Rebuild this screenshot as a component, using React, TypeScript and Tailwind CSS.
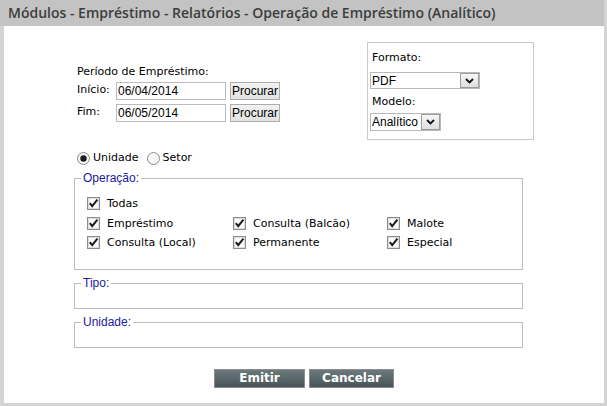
import React from "react";

const Check = () => (
  <svg width="13" height="13" viewBox="0 0 13 13" className="shrink-0">
    <rect x="0.5" y="0.5" width="12" height="12" fill="#f2f2f2" stroke="#8a8b8c" />
    <rect x="1.5" y="1.5" width="10" height="10" fill="#fbfbfb" stroke="#dedede" />
    <path d="M2.8 6.2 L5.2 9.2 L10.4 2.6" fill="none" stroke="#1a1a1a" strokeWidth="2" />
  </svg>
);

const Radio = ({ checked }: { checked?: boolean }) => (
  <svg width="13" height="13" viewBox="0 0 13 13" className="shrink-0">
    <circle cx="6.5" cy="6.5" r="6" fill="#f6f6f6" stroke="#8a8a8a" />
    {checked && <circle cx="6.5" cy="6.5" r="3.2" fill="#1c1c1c" />}
  </svg>
);

const Select = ({ value, className }: { value: string; className: string }) => (
  <div className={`flex bg-white border border-[#b8b8b8] ${className}`}>
    <span className="flex-1 pl-[1px] flex items-center font-['Liberation_Sans',sans-serif] text-[12px] leading-[14px]">
      {value}
    </span>
    <span className="w-[19px] border border-[#9c9c9c] bg-linear-to-b from-[#f6f6f6] to-[#dedede] flex items-center justify-center">
      <svg width="9" height="6" viewBox="0 0 9 6">
        <path d="M1 1 L4.5 4.5 L8 1" fill="none" stroke="#111" strokeWidth="1.8" />
      </svg>
    </span>
  </div>
);

const DateRow = ({ label, value }: { label: string; value: string }) => (
  <div className="flex items-start h-[18px]">
    <span className="w-[39px] pt-[1px]">{label}</span>
    <div className="w-[110px] h-[18px] border border-[#bcbcbc] pl-[1px] flex items-center font-['Liberation_Sans',sans-serif] text-[12px]">
      {value}
    </div>
    <button className="ml-[4px] w-[50px] h-[18px] border border-[#adadad] bg-linear-to-b from-[#f2f2f2] to-[#e2e2e2] font-['Liberation_Sans',sans-serif] text-[12px] leading-[14px] text-black">
      Procurar
    </button>
  </div>
);

const Option = ({ label }: { label: string }) => (
  <div className="flex items-start h-[19px]">
    <span className="mt-[3px]">
      <Check />
    </span>
    <span className="ml-[7px] mt-[3px] leading-[14px]">{label}</span>
  </div>
);

const Legend = ({ children }: { children: React.ReactNode }) => (
  <legend className="ml-[6px] px-[2px] font-['Liberation_Sans',sans-serif] text-[12px] leading-[14px] text-[#1a1aa0]">
    {children}
  </legend>
);

export default function App() {
  return (
    <div className="w-[607px] h-[406px] flex flex-col border-r-[3px] border-b-[3px] border-[#d4d4d4] font-['DejaVu_Sans',sans-serif] text-[11px] leading-[14px] text-black">
      <div className="h-[26px] shrink-0 bg-[#c3c3c3] flex items-center pl-[8px] font-['Open_Sans',sans-serif] font-semibold text-[14px] text-[#3d3d3d]">
        Módulos - Empréstimo - Relatórios - Operação de Empréstimo (Analítico)
      </div>

      <div className="flex-1 bg-white border-l-4 border-[#d4d4d4]">
        <div className="pl-[70px]">
          <div className="flex items-start pt-[16px]">
            <div className="w-[293px] pl-[3px] pt-[23px]">
              <div>Período de Empréstimo:</div>
              <div className="mt-[3px] flex flex-col gap-[4px]">
                <DateRow label="Início:" value="06/04/2014" />
                <DateRow label="Fim:" value="06/05/2014" />
              </div>
            </div>
            <div className="w-[167px] h-[98px] border border-[#c8c8c8] pl-[2px] pt-[8px]">
              <div className="pl-[2px]">Formato:</div>
              <Select className="mt-[7px] w-[110px] h-[17px]" value="PDF" />
              <div className="pl-[2px] mt-[6px]">Modelo:</div>
              <Select className="mt-[4px] w-[71px] h-[18px]" value="Analítico" />
            </div>
          </div>

          <div className="mt-[11px] h-[14px] pl-[3px] flex items-center">
            <Radio checked />
            <span className="ml-[3px]">Unidade</span>
            <span className="ml-[8px]">
              <Radio />
            </span>
            <span className="ml-[3px]">Setor</span>
          </div>

          <fieldset className="mt-[6px] w-[449px] border border-[#bdbdbd]">
            <Legend>Operação:</Legend>
            <div className="pl-[12px] pt-[9px] pb-[17px]">
              <div className="h-[20px]">
                <Option label="Todas" />
              </div>
              <div className="grid grid-cols-[146px_154px_1fr]">
                <Option label="Empréstimo" />
                <Option label="Consulta (Balcão)" />
                <Option label="Malote" />
                <Option label="Consulta (Local)" />
                <Option label="Permanente" />
                <Option label="Especial" />
              </div>
            </div>
          </fieldset>

          <fieldset className="mt-[6px] w-[449px] border border-[#bdbdbd] pb-[18px]">
            <Legend>Tipo:</Legend>
          </fieldset>

          <fieldset className="mt-[6px] w-[449px] border border-[#bdbdbd] pb-[18px]">
            <Legend>Unidade:</Legend>
          </fieldset>
        </div>

        <div className="mt-[21px] flex justify-center gap-[4px]">
          <button className="w-[91px] h-[19px] border border-[#8c8c8c] bg-linear-to-b from-[#6c7a7e] to-[#485458] text-white font-bold text-[12px] leading-[17px]">
            Emitir
          </button>
          <button className="w-[85px] h-[19px] border border-[#8c8c8c] bg-linear-to-b from-[#6c7a7e] to-[#485458] text-white font-bold text-[12px] leading-[17px]">
            Cancelar
          </button>
        </div>
      </div>
    </div>
  );
}
